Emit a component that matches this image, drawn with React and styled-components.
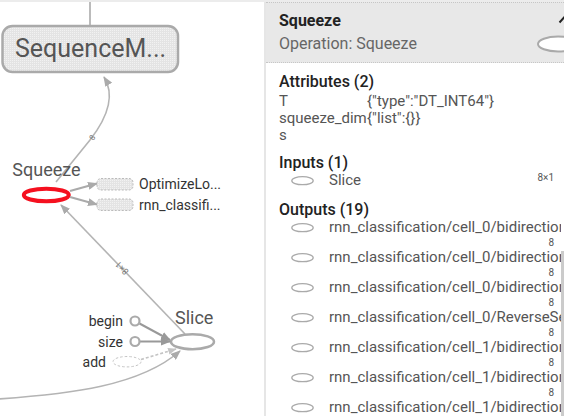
import styled, { createGlobalStyle } from "styled-components";

const GlobalStyle = createGlobalStyle`
  html, body {
    margin: 0;
    padding: 0;
    background: #fff;
  }
  body {
    font-family: Roboto, "Noto Sans", sans-serif;
    overflow: hidden;
  }
`;

const attributes = [
  { key: "T", value: '{"type":"DT_INT64"}' },
  { key: "squeeze_dims", value: '{"list":{}}' },
];

const inputs = [{ name: "Slice", shape: "8×1" }];

const outputs = [
  "rnn_classification/cell_0/bidirectional_rnn",
  "rnn_classification/cell_0/bidirectional_rnn",
  "rnn_classification/cell_0/bidirectional_rnn",
  "rnn_classification/cell_0/ReverseSequence",
  "rnn_classification/cell_1/bidirectional_rnn",
  "rnn_classification/cell_1/bidirectional_rnn",
  "rnn_classification/cell_1/bidirectional_rnn",
];

function Graph() {
  return (
    <svg viewBox="0 2 264 414" width="264" height="414">
      <defs>
        <marker id="arrow" viewBox="0 0 10 8" refX="9" refY="4" markerWidth="10" markerHeight="8" markerUnits="userSpaceOnUse" orient="auto">
          <path d="M0,0 L10,4 L0,8 z" fill="#aaa" />
        </marker>
        <marker id="arrowDark" viewBox="0 0 10 8" refX="9" refY="4" markerWidth="10" markerHeight="9" markerUnits="userSpaceOnUse" orient="auto">
          <path d="M0,0 L10,4 L0,8 z" fill="#999" />
        </marker>
        <marker id="arrowLight" viewBox="0 0 10 8" refX="9" refY="4" markerWidth="9" markerHeight="7" markerUnits="userSpaceOnUse" orient="auto">
          <path d="M0,0 L10,4 L0,8 z" fill="#c4c4c4" />
        </marker>
        <pattern id="dots" width="2" height="2" patternUnits="userSpaceOnUse">
          <rect width="2" height="2" fill="#e4e4e4" />
          <rect width="1" height="1" fill="#f2f2f2" />
        </pattern>
      </defs>

      <line x1="90" y1="0" x2="90" y2="25" stroke="#bbb" strokeWidth="2" />
      <rect x="2.5" y="26" width="175.5" height="46" rx="10" fill="url(#dots)" stroke="#aaa" strokeWidth="2.5" />
      <text x="15" y="57.3" fontSize="25" fill="#555">SequenceM...</text>

      <path d="M56 182 L90 140 C104 122 117 98 104 77" fill="none" stroke="#b4b4b4" strokeWidth="1.6" markerEnd="url(#arrow)" />
      <text x="93" y="140" fontSize="8" fill="#777" transform="rotate(-55 93 138)" textAnchor="middle">8</text>

      <text x="46.5" y="176" fontSize="18" fill="#555" textAnchor="middle">Squeeze</text>
      <ellipse cx="46.3" cy="195" rx="22.5" ry="6.3" fill="#fff" stroke="#f5101f" strokeWidth="4" />

      <line x1="70" y1="191" x2="97" y2="183.5" stroke="#aaa" strokeWidth="2.2" markerEnd="url(#arrow)" />
      <line x1="70" y1="197" x2="97" y2="204.5" stroke="#aaa" strokeWidth="2.2" markerEnd="url(#arrow)" />
      <rect x="97" y="178.5" width="36" height="11.5" rx="4" fill="url(#dots)" stroke="#bbb" strokeDasharray="2 1.5" />
      <rect x="97" y="199" width="36" height="11.5" rx="4" fill="url(#dots)" stroke="#bbb" strokeDasharray="2 1.5" />
      <text x="139" y="188.5" fontSize="14" fill="#333">OptimizeLo...</text>
      <text x="139" y="209.5" fontSize="14" fill="#333">rnn_classifi...</text>

      <line x1="185" y1="334" x2="61" y2="205" stroke="#b4b4b4" strokeWidth="1.6" markerEnd="url(#arrow)" />
      <text x="122" y="271" fontSize="9" fill="#777" textAnchor="middle" transform="rotate(226 122 268)">8×1</text>

      <path d="M-2 399 C70 394 140 386 180 351" fill="none" stroke="#b4b4b4" strokeWidth="1.6" markerEnd="url(#arrow)" />

      <text x="175" y="323.5" fontSize="18" fill="#555">Slice</text>
      <ellipse cx="192.5" cy="341.7" rx="21.5" ry="7.5" fill="#fff" stroke="#aaa" strokeWidth="2.5" />

      <text x="123" y="325.5" fontSize="14" fill="#333" textAnchor="end">begin</text>
      <text x="123" y="346.5" fontSize="14" fill="#333" textAnchor="end">size</text>
      <text x="106" y="367" fontSize="14" fill="#333" textAnchor="end">add</text>

      <line x1="139.5" y1="323.5" x2="170" y2="340" stroke="#999" strokeWidth="2" markerEnd="url(#arrowDark)" />
      <line x1="140" y1="341.5" x2="170" y2="341.5" stroke="#999" strokeWidth="2" markerEnd="url(#arrowDark)" />
      <circle cx="135" cy="321" r="4.5" fill="#fff" stroke="#aaa" strokeWidth="2.2" />
      <circle cx="135" cy="341.5" r="4.5" fill="#fff" stroke="#aaa" strokeWidth="2.2" />

      <ellipse cx="127" cy="361.7" rx="14" ry="5.2" fill="#fff" stroke="#c4c4c4" strokeDasharray="2.5 2" />
      <line x1="141" y1="359.5" x2="176" y2="349" stroke="#c4c4c4" strokeWidth="1.6" strokeDasharray="3 2" markerEnd="url(#arrowLight)" />
    </svg>
  );
}

function NodeIcon() {
  return (
    <svg width="23" height="17" viewBox="0 0 23 17">
      <ellipse cx="11.5" cy="8.7" rx="10.7" ry="4" fill="#fff" stroke="#aaa" strokeWidth="1.3" />
    </svg>
  );
}

function HeaderIcon() {
  return (
    <svg width="45" height="50" viewBox="0 0 45 50">
      <path d="M24.5 12.5 L30 6.5 L35.5 12.5" fill="none" stroke="#222" strokeWidth="2" />
      <ellipse cx="23" cy="34" rx="20" ry="7.5" fill="#fff" stroke="#aaa" strokeWidth="2" />
    </svg>
  );
}

export default function App() {
  return (
    <Page>
      <GlobalStyle />
      <TopStrip />
      <Main>
        <Canvas>
          <Graph />
        </Canvas>
        <Panel>
          <Header>
            <HeaderText>
              <Title>Squeeze</Title>
              <Subtitle>Operation: Squeeze</Subtitle>
            </HeaderText>
            <HeaderAside>
              <HeaderIcon />
            </HeaderAside>
          </Header>
          <Body>
            <Content>
              <SectionTitle>Attributes (2)</SectionTitle>
              <AttrTable>
                {attributes.map((a) => (
                  <AttrRow key={a.key}>
                    <AttrKey>{a.key}</AttrKey>
                    <AttrValue>{a.value}</AttrValue>
                  </AttrRow>
                ))}
              </AttrTable>

              <SectionTitle $gap={10}>Inputs (1)</SectionTitle>
              {inputs.map((n) => (
                <NodeRow key={n.name}>
                  <NodeIcon />
                  <NodeName>{n.name}</NodeName>
                  <Count>{n.shape}</Count>
                </NodeRow>
              ))}

              <SectionTitle $gap={11.5}>Outputs (19)</SectionTitle>
              {outputs.map((name, i) => (
                <NodeRow key={i} $stacked>
                  <NodeIcon />
                  <NodeName>{name}</NodeName>
                  <Count $below>8</Count>
                </NodeRow>
              ))}
            </Content>
            <Scrollbar>
              <Thumb />
            </Scrollbar>
          </Body>
        </Panel>
      </Main>
    </Page>
  );
}

const Page = styled.div`
  width: 564px;
  height: 416px;
  display: flex;
  flex-direction: column;
  overflow: hidden;
`;

const TopStrip = styled.div`
  height: 2px;
  background: #ececec;
  flex-shrink: 0;
`;

const Main = styled.div`
  flex: 1;
  min-height: 0;
  display: flex;
`;

const Canvas = styled.div`
  width: 264px;
  flex-shrink: 0;
  overflow: hidden;

  svg {
    display: block;
  }
`;

const Panel = styled.aside`
  flex: 1;
  min-width: 0;
  border-left: 2px solid #e6e6e6;
  display: flex;
  flex-direction: column;
  overflow: hidden;
`;

const Header = styled.header`
  height: 61px;
  box-sizing: border-box;
  display: flex;
  background: #e8e8e8;
  border-top: 1px dotted #c6c6c6;
  border-bottom: 1px dotted #c6c6c6;
  padding: 9px 0 9px 13px;
  flex-shrink: 0;
`;

const HeaderText = styled.div`
  flex: 1;
  min-width: 0;
`;

const HeaderAside = styled.div`
  width: 45px;
  flex-shrink: 0;
  margin-right: -16px;
  margin-top: -2px;

  svg {
    display: block;
  }
`;

const Title = styled.div`
  font-size: 16px;
  font-weight: 700;
  line-height: 18px;
  color: #222;
  margin-bottom: 5px;
`;

const Subtitle = styled.div`
  font-size: 16px;
  line-height: 18px;
  color: #666;
`;

const Body = styled.div`
  flex: 1;
  min-height: 0;
  display: flex;
`;

const Content = styled.div`
  flex: 1;
  min-width: 0;
  padding: 10px 0 0 13px;
  overflow: hidden;
`;

const SectionTitle = styled.div`
  font-size: 16px;
  font-weight: 500;
  line-height: 18px;
  color: #222;
  margin-top: ${(p) => p.$gap || 0}px;
`;

const AttrTable = styled.div`
  margin-top: 2px;
`;

const AttrRow = styled.div`
  display: grid;
  grid-template-columns: 88px 1fr;
  font-size: 15px;
  line-height: 17px;
  color: #555;
`;

const AttrKey = styled.span`
  word-break: break-all;
`;

const AttrValue = styled.span`
  white-space: nowrap;
`;

const NodeRow = styled.div`
  display: grid;
  grid-template-columns: ${(p) => (p.$stacked ? "23px minmax(0, 1fr)" : "23px minmax(0, 1fr) auto")};
  column-gap: 15px;
  padding-left: 12px;

  svg {
    display: block;
  }
`;

const NodeName = styled.span`
  font-size: 15px;
  line-height: 17px;
  color: #555;
  white-space: nowrap;
  overflow: hidden;
`;

const Count = styled.span`
  font-size: 10px;
  line-height: 13px;
  color: #555;
  text-align: right;
  padding-right: 7px;
  ${(p) => (p.$below ? "grid-column: 1 / -1;" : "margin-top: -1px;")}
`;

const Scrollbar = styled.div`
  width: 3px;
  display: flex;
  flex-direction: column;
  flex-shrink: 0;
`;

const Thumb = styled.div`
  flex: 1;
  margin-top: 188px;
  background: #cbcbcb;
`;
